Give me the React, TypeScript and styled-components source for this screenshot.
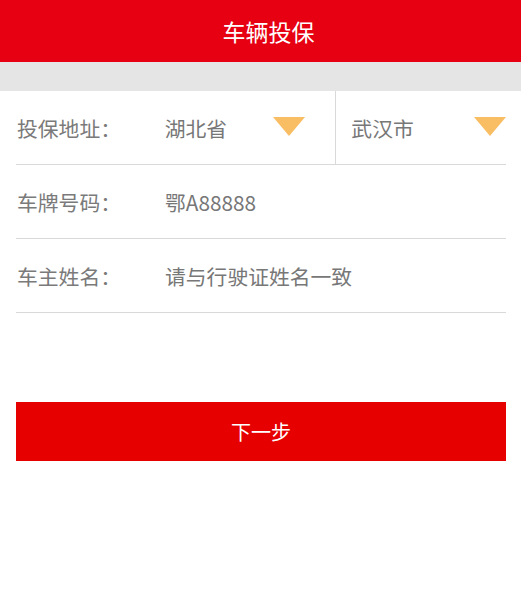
import React from "react";
import styled, { createGlobalStyle } from "styled-components";

const GlobalStyle = createGlobalStyle`
  html, body {
    margin: 0;
    padding: 0;
    background: #fff;
    font-family: "Noto Sans CJK SC", "Roboto", sans-serif;
  }
`;

const Page = styled.div`
  width: 521px;
  min-height: 615px;
  background: #fff;
  display: flex;
  flex-direction: column;
`;

const Header = styled.header`
  height: 62px;
  background: #e60012;
  color: #fff;
  display: flex;
  align-items: center;
  justify-content: center;
  padding-left: 16px;
  font-size: 23px;
  box-sizing: border-box;
`;

const Band = styled.div`
  height: 29px;
  background: #e5e5e5;
`;

const Form = styled.div`
  display: flex;
  flex-direction: column;
  padding: 0 15px 0 16px;
`;

const Row = styled.div`
  height: 73px;
  display: flex;
  align-items: stretch;
  border-bottom: 1px solid #d9d9d9;
  font-size: 20.8px;
  color: #777;
`;

const Label = styled.div`
  width: 148px;
  display: flex;
  align-items: center;
  padding-left: 1px;
  color: #7a7a7a;
`;

const Value = styled.div`
  flex: 1;
  display: flex;
  align-items: center;
  color: #777;
`;

const Select = styled.div<{ $w: number; $divider?: boolean }>`
  width: ${(p) => p.$w}px;
  display: flex;
  align-items: center;
  justify-content: space-between;
  box-sizing: border-box;
  padding-left: ${(p) => (p.$divider ? 15 : 0)}px;
  padding-right: ${(p) => (p.$divider ? 0 : 30)}px;
  border-left: ${(p) => (p.$divider ? "1px solid #d9d9d9" : "none")};
`;

const Arrow = styled.span`
  width: 0;
  height: 0;
  border-left: 16px solid transparent;
  border-right: 16px solid transparent;
  border-top: 19px solid #f9bd64;
  margin-top: -3px;
`;

const Button = styled.button`
  margin: 89px 15px 0 16px;
  height: 59px;
  border: none;
  background: #e60000;
  color: #fff;
  font-family: "Noto Sans CJK SC", sans-serif;
  font-size: 20px;
  border-radius: 0;
`;

export default function App() {
  return (
    <Page>
      <GlobalStyle />
      <Header>车辆投保</Header>
      <Band />
      <Form>
        <Row>
          <Label>投保地址：</Label>
          <Select $w={171}>
            湖北省
            <Arrow />
          </Select>
          <Select $w={171} $divider>
            武汉市
            <Arrow />
          </Select>
        </Row>
        <Row>
          <Label>车牌号码：</Label>
          <Value>鄂A88888</Value>
        </Row>
        <Row>
          <Label>车主姓名：</Label>
          <Value>请与行驶证姓名一致</Value>
        </Row>
      </Form>
      <Button>下一步</Button>
    </Page>
  );
}
